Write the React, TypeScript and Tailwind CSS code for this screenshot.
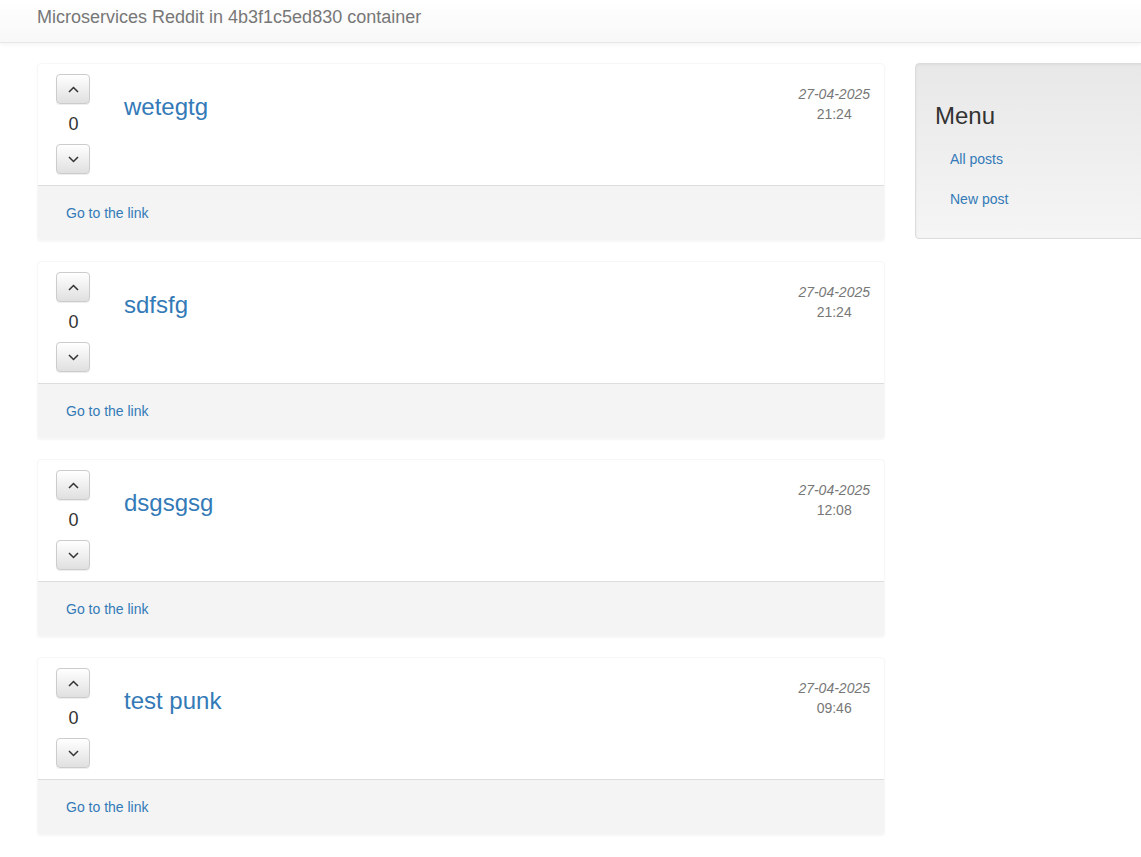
const posts = [
  { id: 1, title: "wetegtg", date: "27-04-2025", time: "21:24", votes: 0 },
  { id: 2, title: "sdfsfg", date: "27-04-2025", time: "21:24", votes: 0 },
  { id: 3, title: "dsgsgsg", date: "27-04-2025", time: "12:08", votes: 0 },
  { id: 4, title: "test punk", date: "27-04-2025", time: "09:46", votes: 0 },
];

function Chevron({ up }: { up?: boolean }) {
  return (
    <svg width="11" height="7" viewBox="0 0 11 7" fill="none">
      <polyline
        points={up ? "1,6 5.5,1.5 10,6" : "1,1 5.5,5.5 10,1"}
        stroke="#333"
        strokeWidth="1.5"
      />
    </svg>
  );
}

function VoteButton({ up }: { up?: boolean }) {
  return (
    <button className="flex h-[30px] w-[34px] items-center justify-center rounded-[4px] border border-[#ccc] bg-gradient-to-b from-white to-[#e0e0e0] shadow-[0_1px_1px_rgba(0,0,0,0.075)]">
      <Chevron up={up} />
    </button>
  );
}

function PostCard({ post }: { post: (typeof posts)[number] }) {
  return (
    <div className="overflow-hidden rounded-[4px] border border-[#f7f7f7] bg-white shadow-[0_1px_2px_rgba(0,0,0,0.04)]">
      <div className="flex h-[121px] pl-[18px] pr-[14px] py-[10px]">
        <div className="flex w-[34px] flex-col items-center">
          <VoteButton up />
          <div className="flex h-[40px] items-center pl-[1px] text-[18px] leading-[20px] text-[#333]">{post.votes}</div>
          <VoteButton />
        </div>
        <a href="#" className="ml-[34px] mt-[20px] h-fit text-[24px] leading-[26px] text-[#337ab7]">
          {post.title}
        </a>
        <div className="ml-auto mt-[10px] flex flex-col items-center text-[14px] leading-[20px] text-[#777]">
          <span className="italic">{post.date}</span>
          <span>{post.time}</span>
        </div>
      </div>
      <div className="flex h-[55px] items-center border-t border-[#ddd] bg-[#f4f4f4] pl-[28px] text-[14px] leading-[20px] text-[#337ab7]">
        <a href="#" className="mt-[-1px]">Go to the link</a>
      </div>
    </div>
  );
}

export default function App() {
  return (
    <div className="min-h-screen w-full overflow-hidden bg-white font-['Liberation_Sans',Arial,sans-serif] text-[14px]">
      {/* Navbar */}
      <nav className="flex h-[43px] items-center border-b border-[#e7e7e7] bg-gradient-to-b from-white to-[#f8f8f8] px-[37px] shadow-[0_1px_5px_rgba(0,0,0,0.06)]">
        <span className="mt-[-8px] text-[18px] text-[#777]">Microservices Reddit in 4b3f1c5ed830 container</span>
      </nav>

      <main className="flex gap-[30px] pl-[37px] pt-[20px]">
        <div className="flex w-[848px] shrink-0 flex-col gap-[20px]">
          {posts.map((p) => (
            <PostCard key={p.id} post={p} />
          ))}
        </div>

        <div className="w-[280px] shrink-0">
          <div className="rounded-[4px] border border-[#dcdcdc] bg-gradient-to-b from-[#e8e8e8] to-[#f5f5f5] p-[19px] shadow-[inset_0_1px_3px_rgba(0,0,0,0.05)]">
            <h3 className="mb-[10px] mt-[20px] text-[24px] leading-[26px] text-[#333]">Menu</h3>
            <ul className="flex flex-col">
              <li>
                <a href="#" className="block px-[15px] py-[10px] leading-[20px] text-[#337ab7]">All posts</a>
              </li>
              <li>
                <a href="#" className="block px-[15px] py-[10px] leading-[20px] text-[#337ab7]">New post</a>
              </li>
            </ul>
          </div>
        </div>
      </main>
    </div>
  );
}
